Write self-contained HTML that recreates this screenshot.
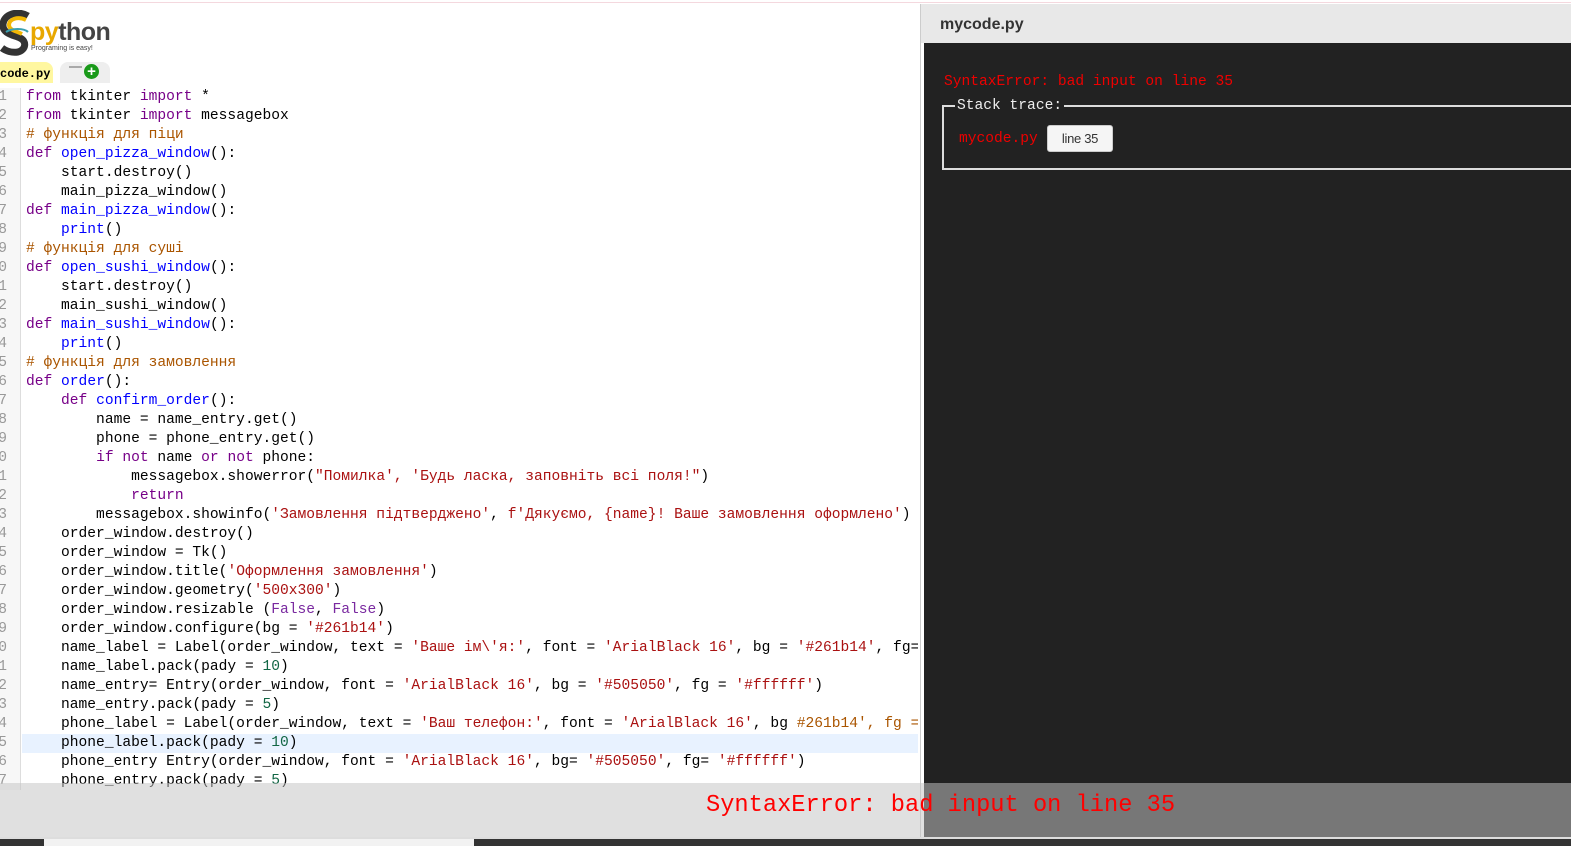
<!DOCTYPE html>
<html><head><meta charset="utf-8"><style>
*{margin:0;padding:0;box-sizing:border-box}
body{width:1571px;height:846px;overflow:hidden;background:#fff;position:relative;font-family:"Liberation Sans",sans-serif}
.topline{position:absolute;left:0;top:2px;width:1571px;height:1px;background:#f4d8de}
.code{position:absolute;left:0;top:88px;width:918px;height:708px;overflow:hidden;font-family:"Liberation Mono","DejaVu Sans Mono",monospace;font-size:14.6px}
.gut{position:absolute;left:0;top:0;width:21px;height:702px;background:#f7f7f7;border-right:1px solid #ddd}
.ln{position:absolute;left:-12px;width:19px;text-align:right;color:#999;height:19px;line-height:19px}
.l{position:absolute;left:26px;white-space:pre;height:19px;line-height:19px;color:#000}
.hl{position:absolute;left:22px;width:900px;height:19px;background:#e8f2ff}
.k{color:#770088}.d{color:#0000ff}.c{color:#aa5500}.s{color:#aa1111}.n{color:#116644}.a{color:#7a2aa0}
.panel{position:absolute;left:920px;top:4px;width:651px;height:834px;border-left:1px solid #ccc}
.ph{position:absolute;left:0;top:0;width:651px;height:39px;background:#e8e8e8;font-weight:bold;font-size:16px;color:#333;padding:12px 0 0 19px}
.pd{position:absolute;left:3px;top:39px;width:648px;height:795px;background:#222}
.err{position:absolute;left:20px;top:31px;color:#e00;font-family:"Liberation Mono",monospace;font-size:14.6px}
.fs{position:absolute;left:18px;top:62px;width:640px;height:65px;border:2px solid #ddd;border-right:none}
.leg{position:absolute;left:11px;top:-10px;background:#222;color:#eee;font-family:"Liberation Mono",monospace;font-size:14.6px;padding:0 2px;line-height:18px}
.fs .f{position:absolute;left:15px;top:24px;color:#e00;font-family:"Liberation Mono",monospace;font-size:14.6px}
.btn{position:absolute;left:103px;top:18px;width:66px;height:27px;background:#f5f5f5;border:1px solid #ccc;border-radius:3px;font-size:13px;color:#333;text-align:center;line-height:25px;letter-spacing:-0.3px}
.ov{position:absolute;left:0;top:783px;width:1571px;height:54px;background:rgba(196,196,196,0.525)}
.ovt{position:absolute;left:706px;top:791px;color:#f00;font-family:"Liberation Mono",monospace;font-size:23.7px;white-space:pre;line-height:30px}
.bs{position:absolute;left:0;top:837px;width:1571px;height:9px;background:#333;border-top:2px solid #ddd}
.bs i{position:absolute;left:44px;top:0;width:430px;height:7px;background:#f2f2f2}
</style></head><body>
<div class="topline"></div>
<svg style="position:absolute;left:0;top:10px" width="115" height="46">
<path d="M28 6 C18 0 4 4 3 14 C2 24 14 25 20 28 C27 31 26 40 18 42 C12 43 6 41 2 38" fill="none" stroke="#333" stroke-width="7"/>
<path d="M26 10 C18 6 9 9 9 15 C9 20 16 21 22 24" fill="none" stroke="#f2b705" stroke-width="4"/>
<path d="M6 22 C12 18 24 18 28 22" fill="none" stroke="#3aa0b0" stroke-width="2"/>
<text x="30" y="30" font-family="Liberation Sans" font-weight="bold" font-size="25" fill="#e8a800" letter-spacing="-0.5">py<tspan fill="#444">thon</tspan></text>
<text x="31" y="40" font-family="Liberation Sans" font-size="7" fill="#444">Programing is easy!</text>
</svg>
<div style="position:absolute;left:0;top:62px;width:53px;height:21px;background:#fff7a0;border-radius:0 8px 0 0;font-family:'Liberation Mono',monospace;font-size:12px;font-weight:bold;line-height:25px;padding-left:0;overflow:hidden;white-space:nowrap">code.py</div>
<div style="position:absolute;left:60px;top:62px;width:50px;height:21px;background:#eee;border-radius:8px 8px 0 0"></div>
<div style="position:absolute;left:69px;top:66px;width:13px;height:2px;background:#aaa"></div>
<div style="position:absolute;left:84px;top:64px;width:15px;height:15px;border-radius:50%;background:#1a9a1a;color:#fff;font-weight:bold;font-size:15px;line-height:15px;text-align:center">+</div>
<div class="code">
<div class="gut"></div>
<div class="hl" style="top:646px"></div>
<div class="ln" style="top:0">1</div><div class="ln" style="top:19px">2</div><div class="ln" style="top:38px">3</div><div class="ln" style="top:57px">4</div><div class="ln" style="top:76px">5</div><div class="ln" style="top:95px">6</div><div class="ln" style="top:114px">7</div><div class="ln" style="top:133px">8</div><div class="ln" style="top:152px">9</div><div class="ln" style="top:171px">10</div><div class="ln" style="top:190px">11</div><div class="ln" style="top:209px">12</div><div class="ln" style="top:228px">13</div><div class="ln" style="top:247px">14</div><div class="ln" style="top:266px">15</div><div class="ln" style="top:285px">16</div><div class="ln" style="top:304px">17</div><div class="ln" style="top:323px">18</div><div class="ln" style="top:342px">19</div><div class="ln" style="top:361px">20</div><div class="ln" style="top:380px">21</div><div class="ln" style="top:399px">22</div><div class="ln" style="top:418px">23</div><div class="ln" style="top:437px">24</div><div class="ln" style="top:456px">25</div><div class="ln" style="top:475px">26</div><div class="ln" style="top:494px">27</div><div class="ln" style="top:513px">28</div><div class="ln" style="top:532px">29</div><div class="ln" style="top:551px">30</div><div class="ln" style="top:570px">31</div><div class="ln" style="top:589px">32</div><div class="ln" style="top:608px">33</div><div class="ln" style="top:627px">34</div><div class="ln" style="top:646px">35</div><div class="ln" style="top:665px">36</div><div class="ln" style="top:684px">37</div>
<div class="l" style="top:0"><span class="k">from</span> tkinter <span class="k">import</span> *</div>
<div class="l" style="top:19px"><span class="k">from</span> tkinter <span class="k">import</span> messagebox</div>
<div class="l c" style="top:38px"># функція для піци</div>
<div class="l" style="top:57px"><span class="k">def</span> <span class="d">open_pizza_window</span>():</div>
<div class="l" style="top:76px">    start.destroy()</div>
<div class="l" style="top:95px">    main_pizza_window()</div>
<div class="l" style="top:114px"><span class="k">def</span> <span class="d">main_pizza_window</span>():</div>
<div class="l" style="top:133px">    <span class="d">print</span>()</div>
<div class="l c" style="top:152px"># функція для суші</div>
<div class="l" style="top:171px"><span class="k">def</span> <span class="d">open_sushi_window</span>():</div>
<div class="l" style="top:190px">    start.destroy()</div>
<div class="l" style="top:209px">    main_sushi_window()</div>
<div class="l" style="top:228px"><span class="k">def</span> <span class="d">main_sushi_window</span>():</div>
<div class="l" style="top:247px">    <span class="d">print</span>()</div>
<div class="l c" style="top:266px"># функція для замовлення</div>
<div class="l" style="top:285px"><span class="k">def</span> <span class="d">order</span>():</div>
<div class="l" style="top:304px">    <span class="k">def</span> <span class="d">confirm_order</span>():</div>
<div class="l" style="top:323px">        name = name_entry.get()</div>
<div class="l" style="top:342px">        phone = phone_entry.get()</div>
<div class="l" style="top:361px">        <span class="k">if</span> <span class="k">not</span> name <span class="k">or</span> <span class="k">not</span> phone:</div>
<div class="l" style="top:380px">            messagebox.showerror(<span class="s">"Помилка', 'Будь ласка, заповніть всі поля!"</span>)</div>
<div class="l" style="top:399px">            <span class="k">return</span></div>
<div class="l" style="top:418px">        messagebox.showinfo(<span class="s">'Замовлення підтверджено'</span>, <span class="s">f'Дякуємо, {name}! Ваше замовлення оформлено'</span>)</div>
<div class="l" style="top:437px">    order_window.destroy()</div>
<div class="l" style="top:456px">    order_window = Tk()</div>
<div class="l" style="top:475px">    order_window.title(<span class="s">'Оформлення замовлення'</span>)</div>
<div class="l" style="top:494px">    order_window.geometry(<span class="s">'500x300'</span>)</div>
<div class="l" style="top:513px">    order_window.resizable (<span class="a">False</span>, <span class="a">False</span>)</div>
<div class="l" style="top:532px">    order_window.configure(bg = <span class="s">'#261b14'</span>)</div>
<div class="l" style="top:551px">    name_label = Label(order_window, text = <span class="s">'Ваше ім\'я:'</span>, font = <span class="s">'ArialBlack 16'</span>, bg = <span class="s">'#261b14'</span>, fg=</div>
<div class="l" style="top:570px">    name_label.pack(pady = <span class="n">10</span>)</div>
<div class="l" style="top:589px">    name_entry= Entry(order_window, font = <span class="s">'ArialBlack 16'</span>, bg = <span class="s">'#505050'</span>, fg = <span class="s">'#ffffff'</span>)</div>
<div class="l" style="top:608px">    name_entry.pack(pady = <span class="n">5</span>)</div>
<div class="l" style="top:627px">    phone_label = Label(order_window, text = <span class="s">'Ваш телефон:'</span>, font = <span class="s">'ArialBlack 16'</span>, bg <span class="c">#261b14', fg =</span></div>
<div class="l" style="top:646px">    phone_label.pack(pady = <span class="n">10</span>)</div>
<div class="l" style="top:665px">    phone_entry Entry(order_window, font = <span class="s">'ArialBlack 16'</span>, bg= <span class="s">'#505050'</span>, fg= <span class="s">'#ffffff'</span>)</div>
<div class="l" style="top:684px">    phone_entry.pack(pady = <span class="n">5</span>)</div>
</div>
<div class="panel">
<div class="ph">mycode.py</div>
<div class="pd">
<div class="err">SyntaxError: bad input on line 35</div>
<div class="fs"><div class="leg">Stack trace:</div><div class="f">mycode.py</div><div class="btn">line 35</div></div>
</div>
</div>
<div class="ov"></div>
<div class="ovt">SyntaxError: bad input on line 35</div>
<div class="bs"><i></i></div>
</body></html>
